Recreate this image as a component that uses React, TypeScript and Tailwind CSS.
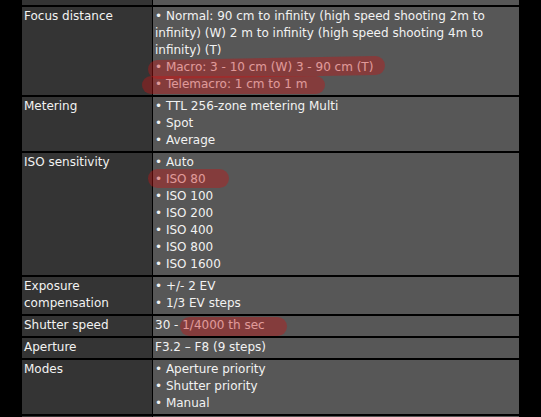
import type { ReactNode } from "react";

type Row = { label: ReactNode; value: ReactNode; mark?: ReactNode };

const Mark = ({ className }: { className: string }) => (
  <span
    className={`pointer-events-none absolute rounded-full bg-[rgba(200,20,20,0.4)] ${className}`}
  />
);

const Li = ({ children }: { children: ReactNode }) => <div>• {children}</div>;

const rows: Row[] = [
  { label: "", value: "" },
  {
    label: "Focus distance",
    value: (
      <>
        <Li>
          Normal: 90 cm to infinity (high speed shooting 2m to infinity) (W) 2 m to infinity (high
          speed shooting 4m to infinity) (T)
        </Li>
        <Li>Macro: 3 - 10 cm (W) 3 - 90 cm (T)</Li>
        <Li>Telemacro: 1 cm to 1 m</Li>
      </>
    ),
    mark: (
      <>
        <Mark className="left-[-5px] top-[51px] h-[19px] w-[237px] -rotate-1" />
        <Mark className="left-[-11px] top-[69px] h-[18px] w-[183px]" />
      </>
    ),
  },
  {
    label: "Metering",
    value: (
      <>
        <Li>TTL 256-zone metering Multi</Li>
        <Li>Spot</Li>
        <Li>Average</Li>
      </>
    ),
  },
  {
    label: "ISO sensitivity",
    value: (
      <>
        {["Auto", "ISO 80", "ISO 100", "ISO 200", "ISO 400", "ISO 800", "ISO 1600"].map((v) => (
          <Li key={v}>{v}</Li>
        ))}
      </>
    ),
    mark: <Mark className="left-[-5px] top-[16px] h-[19px] w-[81px]" />,
  },
  {
    label: (
      <>
        Exposure
        <br />
        compensation
      </>
    ),
    value: (
      <>
        <Li>+/- 2 EV</Li>
        <Li>1/3 EV steps</Li>
      </>
    ),
  },
  {
    label: "Shutter speed",
    value: "30 - 1/4000 th sec",
    mark: <Mark className="left-[27px] top-[1px] h-[19px] w-[107px]" />,
  },
  { label: "Aperture", value: "F3.2 – F8 (9 steps)" },
  {
    label: "Modes",
    value: (
      <>
        <Li>Aperture priority</Li>
        <Li>Shutter priority</Li>
        <Li>Manual</Li>
      </>
    ),
  },
  { label: "", value: "" },
];

export default function App() {
  return (
    <div className="h-[417px] w-[541px] overflow-hidden bg-black pl-[22px] font-['DejaVu_Sans',sans-serif] text-[12px] leading-[17px] text-[#f2f2f2]">
      <div className="-mt-[12px] grid w-[497px] grid-cols-[130px_366px] gap-x-px gap-y-[2px]">
        {rows.map((r, i) => (
          <div key={i} className="contents">
            <div className="min-h-[17px] bg-[#343434] pb-[2px] pl-[2px] pt-px">{r.label}</div>
            <div className="relative min-h-[17px] bg-[#575757] pb-[2px] pl-[2px] pt-px">
              {r.value}
              {r.mark}
            </div>
          </div>
        ))}
      </div>
    </div>
  );
}
